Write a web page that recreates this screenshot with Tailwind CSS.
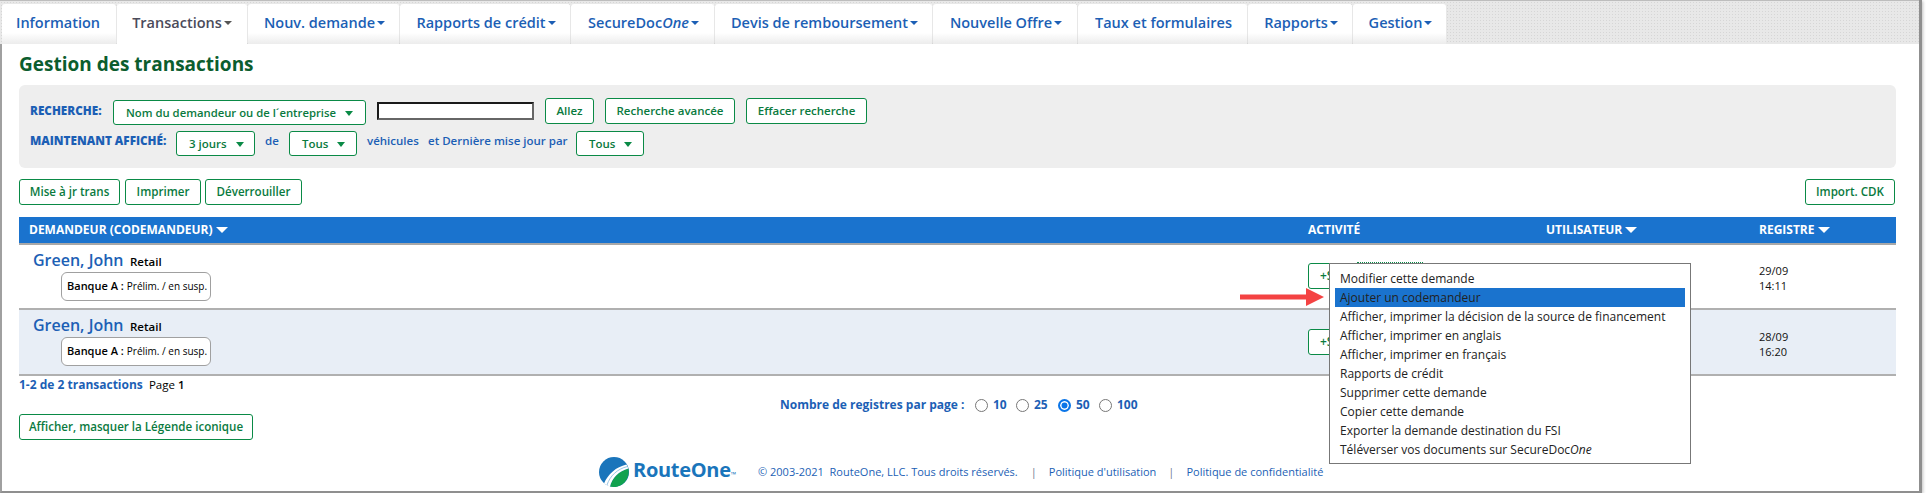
<!doctype html>
<html><head><meta charset="utf-8"><script src="https://cdn.jsdelivr.net/npm/@tailwindcss/browser@4"></script></head>
<body class="bg-white font-['Open_Sans',sans-serif] overflow-hidden">
<div class="relative w-[1922px] h-[493px] bg-white border-l-2 border-r-[3px] border-b-2 border-l-[#a0a0a0] border-r-[#8f8f8f] border-b-[#8f8f8f] shadow-[1px_1px_3px_#c0c0c0]">
  <!-- nav -->
  <nav class="h-[44px] pt-[3px] -ml-[2px] pl-[2px] flex bg-[#e8e8e8] bg-[radial-gradient(#d6d6d6_1px,transparent_1px)] bg-[length:3px_3px] text-[14.5px] font-semibold text-[#1c5fb5] border-t-[1px] border-t-[#bdbdbd]">
    <a class="w-[114px] flex items-center justify-center pb-[3px] pr-[2px] bg-gradient-to-b from-white from-[72%] to-[#ececec] rounded-t-[3px]">Information</a>
    <a class="w-[132px] flex items-center justify-center pb-[3px] bg-white text-[#4b4b5a] rounded-t-[3px] border-x border-[#d0d0d0] border-dotted">Transactions<span class="ml-[2px] mt-[1px] w-0 h-0 border-x-[4.5px] border-t-[4.5px] border-x-transparent border-t-[#555]"></span></a>
    <a class="w-[152px] flex items-center justify-center pb-[3px] pl-[2px] bg-gradient-to-b from-white from-[72%] to-[#ececec] rounded-t-[3px] border-r border-[#d0d0d0] border-dotted">Nouv. demande<span class="ml-[2px] mt-[1px] w-0 h-0 border-x-[4.5px] border-t-[4.5px] border-x-transparent border-t-[#1c5fb5]"></span></a>
    <a class="w-[171px] flex items-center justify-center pb-[3px] pl-[2px] bg-gradient-to-b from-white from-[72%] to-[#ececec] rounded-t-[3px] border-r border-[#d0d0d0] border-dotted">Rapports de crédit<span class="ml-[2px] mt-[1px] w-0 h-0 border-x-[4.5px] border-t-[4.5px] border-x-transparent border-t-[#1c5fb5]"></span></a>
    <a class="w-[144px] flex items-center justify-center pb-[3px] pl-[2px] bg-gradient-to-b from-white from-[72%] to-[#ececec] rounded-t-[3px] border-r border-[#d0d0d0] border-dotted">SecureDoc<i>One</i><span class="ml-[2px] mt-[1px] w-0 h-0 border-x-[4.5px] border-t-[4.5px] border-x-transparent border-t-[#1c5fb5]"></span></a>
    <a class="w-[218px] flex items-center justify-center pb-[3px] pl-[2px] bg-gradient-to-b from-white from-[72%] to-[#ececec] rounded-t-[3px] border-r border-[#d0d0d0] border-dotted">Devis de remboursement<span class="ml-[2px] mt-[1px] w-0 h-0 border-x-[4.5px] border-t-[4.5px] border-x-transparent border-t-[#1c5fb5]"></span></a>
    <a class="w-[145px] flex items-center justify-center pb-[3px] pl-[2px] bg-gradient-to-b from-white from-[72%] to-[#ececec] rounded-t-[3px] border-r border-[#d0d0d0] border-dotted">Nouvelle Offre<span class="ml-[2px] mt-[1px] w-0 h-0 border-x-[4.5px] border-t-[4.5px] border-x-transparent border-t-[#1c5fb5]"></span></a>
    <a class="w-[170px] flex items-center justify-center pb-[3px] pl-[2px] bg-gradient-to-b from-white from-[72%] to-[#ececec] rounded-t-[3px] border-r border-[#d0d0d0] border-dotted">Taux et formulaires</a>
    <a class="w-[105px] flex items-center justify-center pb-[3px] pl-[2px] bg-gradient-to-b from-white from-[72%] to-[#ececec] rounded-t-[3px] border-r border-[#d0d0d0] border-dotted">Rapports<span class="ml-[2px] mt-[1px] w-0 h-0 border-x-[4.5px] border-t-[4.5px] border-x-transparent border-t-[#1c5fb5]"></span></a>
    <a class="w-[93px] flex items-center justify-center pb-[3px] pl-[2px] bg-gradient-to-b from-white from-[72%] to-[#ececec] rounded-t-[3px]">Gestion<span class="ml-[2px] mt-[1px] w-0 h-0 border-x-[4.5px] border-t-[4.5px] border-x-transparent border-t-[#1c5fb5]"></span></a>
  </nav>
  <main class="pl-[17px] w-[1894px]">
    <h1 class="h-[41px] pt-[7px] text-[19px] leading-[26px] font-bold text-[#0b5d2e]">Gestion des transactions</h1>
    <!-- search -->
    <section class="h-[83px] bg-[#eeeeee] rounded-[6px] pl-[11px] pt-[13px] text-[11.5px] font-semibold text-[#1c5fb5]">
      <div class="flex items-center h-[26px]">
        <b class="w-[83px] text-[11.7px]">RECHERCHE:</b>
        <span class="w-[253px] h-[25px] mt-[3px] pl-[12px] pt-[1px] flex items-center bg-white border border-[#0a8a46] rounded-[3px] text-[11.3px] text-[#0a7a3e]">Nom du demandeur ou de l´entreprise<span class="ml-[9px] w-0 h-0 border-x-[4px] border-t-[5px] border-x-transparent border-t-[#0a8a46]"></span></span>
        <span class="ml-[11px] w-[157px] h-[18px] bg-white border-2 border-t-[#1a1a1a] border-l-[#1a1a1a] border-r-[#666] border-b-[#666] -mt-[1px]"></span>
        <span class="ml-[11px] w-[49px] h-[26px] flex items-center justify-center bg-white border border-[#0a8a46] rounded-[3px] text-[#0a7a3e]">Allez</span>
        <span class="ml-[11px] w-[130px] h-[26px] flex items-center justify-center bg-white border border-[#0a8a46] rounded-[3px] text-[#0a7a3e]">Recherche avancée</span>
        <span class="ml-[11px] w-[121px] h-[26px] flex items-center justify-center bg-white border border-[#0a8a46] rounded-[3px] text-[#0a7a3e]">Effacer recherche</span>
      </div>
      <div class="flex items-center h-[25px] mt-[7px]">
        <b class="w-[146px] -mt-[5px] text-[11.7px]">MAINTENANT AFFICHÉ:</b>
        <span class="w-[79px] h-[25px] pl-[12px] pt-[1px] flex items-center bg-white border border-[#0a8a46] rounded-[3px] text-[#0a7a3e]">3 jours<span class="ml-[9px] w-0 h-0 border-x-[4px] border-t-[5px] border-x-transparent border-t-[#0a8a46]"></span></span>
        <span class="ml-[10px] w-[24px] -mt-[5px]">de</span>
        <span class="w-[68px] h-[25px] pl-[12px] pt-[1px] flex items-center bg-white border border-[#0a8a46] rounded-[3px] text-[#0a7a3e]">Tous<span class="ml-[9px] w-0 h-0 border-x-[4px] border-t-[5px] border-x-transparent border-t-[#0a8a46]"></span></span>
        <span class="ml-[10px] w-[61px] -mt-[5px]">véhicules</span>
        <span class="w-[148px] -mt-[5px]">et Dernière mise jour par</span>
        <span class="w-[68px] h-[25px] pl-[12px] pt-[1px] flex items-center bg-white border border-[#0a8a46] rounded-[3px] text-[#0a7a3e]">Tous<span class="ml-[9px] w-0 h-0 border-x-[4px] border-t-[5px] border-x-transparent border-t-[#0a8a46]"></span></span>
      </div>
    </section>
    <!-- actions -->
    <div class="flex mt-[11px] h-[26px] text-[11.6px] font-semibold text-[#0a7a3e]">
      <span class="w-[101px] flex items-center justify-center bg-white border border-[#0a8a46] rounded-[3px]">Mise à jr trans</span>
      <span class="ml-[5px] w-[76px] flex items-center justify-center bg-white border border-[#0a8a46] rounded-[3px]">Imprimer</span>
      <span class="ml-[4px] w-[97px] flex items-center justify-center bg-white border border-[#0a8a46] rounded-[3px]">Déverrouiller</span>
      <span class="ml-auto mr-[1px] w-[90px] flex items-center justify-center bg-white border border-[#0a8a46] rounded-[3px]">Import. CDK</span>
    </div>
    <!-- table -->
    <div class="mt-[12px] h-[28px] grid grid-cols-[1289px_238px_213px_137px] items-center bg-[#1a73ce] border-b-2 border-[#a8a8a8] text-[12px] font-bold text-white">
      <span class="pl-[10px] flex items-center">DEMANDEUR (CODEMANDEUR)<span class="ml-[3px] w-0 h-0 border-x-[6px] border-t-[6px] border-x-transparent border-t-white"></span></span>
      <span>ACTIVITÉ</span>
      <span class="flex items-center">UTILISATEUR<span class="ml-[3px] w-0 h-0 border-x-[6px] border-t-[6px] border-x-transparent border-t-white"></span></span>
      <span class="flex items-center">REGISTRE<span class="ml-[3px] w-0 h-0 border-x-[6px] border-t-[6px] border-x-transparent border-t-white"></span></span>
    </div>
    <div class="h-[65px] grid grid-cols-[1289px_451px_137px] border-b-2 border-[#b0b0b0]">
      <div class="pl-[14px] pt-[5px]">
        <div class="flex items-baseline h-[22px] -mt-[1px] mb-[1px]"><span class="w-[97px] text-[16px] leading-[22px] font-semibold text-[#1c5fb5]">Green, John</span><span class="text-[11.5px] font-semibold text-black">Retail</span></div>
        <div class="ml-[28px] mt-[1px] w-[150px] h-[29px] border border-[#a0a0a0] rounded-[6px] bg-white pl-[5px] flex items-center text-black"><b class="text-[11px] font-semibold">Banque A :</b><span class="ml-[3px] text-[10px] -mt-[1px]">Prélim. / en susp.</span></div>
      </div>
      <div class="pt-[18px] flex"><span class="w-[45px] h-[26px] pl-[11px] flex items-center bg-white border border-[#0a8a46] rounded-[3px] text-[12px] font-semibold text-[#0a7a3e]">+S</span></div>
      <div class="pt-[18px] text-[11px] leading-[15px] text-[#111]">29/09<br>14:11</div>
    </div>
    <div class="h-[66px] grid grid-cols-[1289px_451px_137px] bg-[#e8eef6] border-b-2 border-[#b0b0b0]">
      <div class="pl-[14px] pt-[5px]">
        <div class="flex items-baseline h-[22px] -mt-[1px] mb-[1px]"><span class="w-[97px] text-[16px] leading-[22px] font-semibold text-[#1c5fb5]">Green, John</span><span class="text-[11.5px] font-semibold text-black">Retail</span></div>
        <div class="ml-[28px] mt-[1px] w-[150px] h-[29px] border border-[#a0a0a0] rounded-[6px] bg-white pl-[5px] flex items-center text-black"><b class="text-[11px] font-semibold">Banque A :</b><span class="ml-[3px] text-[10px] -mt-[1px]">Prélim. / en susp.</span></div>
      </div>
      <div class="pt-[19px] flex"><span class="w-[45px] h-[26px] pl-[11px] flex items-center bg-white border border-[#0a8a46] rounded-[3px] text-[12px] font-semibold text-[#0a7a3e]">+S</span></div>
      <div class="pt-[19px] text-[11px] leading-[15px] text-[#111]">28/09<br>16:20</div>
    </div>
    <!-- pagination -->
    <div class="h-[28px] relative">
      <p class="text-[12px] leading-[18px] font-bold text-[#1c5fb5]">1-2 de 2 transactions <span class="ml-[3px] text-[11.5px] font-normal text-black">Page <b class="font-semibold">1</b></span></p>
      <div class="absolute left-[761px] top-[20px] flex items-center text-[12px] leading-[18px] font-bold text-[#1c5fb5]">
        <span class="w-[195px]">Nombre de registres par page :</span>
        <span class="w-[13px] h-[13px] rounded-full border border-[#777] bg-white"></span><span class="ml-[5px] w-[23px] -mt-[1px]">10</span>
        <span class="w-[13px] h-[13px] rounded-full border border-[#777] bg-white"></span><span class="ml-[5px] w-[24px] -mt-[1px]">25</span>
        <span class="w-[13px] h-[13px] rounded-full border-2 border-[#0a75e8] bg-[#0a75e8] shadow-[inset_0_0_0_1.5px_white]"></span><span class="ml-[5px] w-[23px] -mt-[1px]">50</span>
        <span class="w-[13px] h-[13px] rounded-full border border-[#777] bg-white"></span><span class="ml-[5px] -mt-[1px]">100</span>
      </div>
    </div>
    <div class="mt-[10px] w-[234px] h-[26px] flex items-center justify-center bg-white border border-[#0a8a46] rounded-[3px] text-[11.6px] font-semibold text-[#0a7a3e]">Afficher, masquer la Légende iconique</div>
    <!-- footer -->
    <footer class="mt-[17px] ml-[580px] flex items-center h-[30px] text-[11px] text-[#1c5fb5]">
      <svg class="w-[30px] h-[30px] shrink-0" viewBox="0 0 30 30"><circle cx="15" cy="15" r="15" fill="#1a75bb"/><path d="M11 29.5C13 21 20 14 29.3 11.5A15 15 0 0 1 11 29.5Z" fill="#12a24f"/><path d="M5 26.5C9 17 17 10 27.5 7.5L29.3 11.5C20 14 13 21 11 29.5A15 15 0 0 1 5 26.5Z" fill="#fff"/><path d="M8 28C11 19 18 12 28.5 9.5" fill="none" stroke="#7fb6dd" stroke-width="0.8"/></svg>
      <span class="ml-[4px] w-[125px] text-[20px] leading-[30px] font-bold text-[#1a75bb] tracking-[-0.3px]">RouteOne<span class="text-[7px] font-normal">™</span></span>
      <span>© 2003-2021&nbsp; RouteOne, LLC. Tous droits réservés.</span>
      <span class="ml-[13px] text-[#6a7a90]">|</span>
      <span class="ml-[12px]">Politique d'utilisation</span>
      <span class="ml-[12px] text-[#6a7a90]">|</span>
      <span class="ml-[12px]">Politique de confidentialité</span>
    </footer>
  </main>
  <!-- popup menu -->
  <div class="absolute left-[1327px] top-[263px] w-[362px] h-[201px] bg-white border-[1.5px] border-[#777] pt-[4.5px] px-[5px] text-[12px] leading-[19px] text-[#222]">
    <div class="pl-[5px]">Modifier cette demande</div>
    <div class="pl-[5px] bg-[#1a73ce]">Ajouter un codemandeur</div>
    <div class="pl-[5px]">Afficher, imprimer la décision de la source de financement</div>
    <div class="pl-[5px]">Afficher, imprimer en anglais</div>
    <div class="pl-[5px]">Afficher, imprimer en français</div>
    <div class="pl-[5px]">Rapports de crédit</div>
    <div class="pl-[5px]">Supprimer cette demande</div>
    <div class="pl-[5px]">Copier cette demande</div>
    <div class="pl-[5px]">Exporter la demande destination du FSI</div>
    <div class="pl-[5px]">Téléverser vos documents sur SecureDoc<i>One</i></div>
  </div>
  <div class="absolute left-[1355px] top-[262px] w-[66px] border-t border-dotted border-[#0a8a46]"></div>
  <svg class="absolute left-[1238px] top-[288px]" width="84" height="18" viewBox="0 0 84 18"><path d="M0 6.5H66V0L84 9L66 18V11.5H0Z" fill="#f44343"/></svg>
</div>
</body></html>
